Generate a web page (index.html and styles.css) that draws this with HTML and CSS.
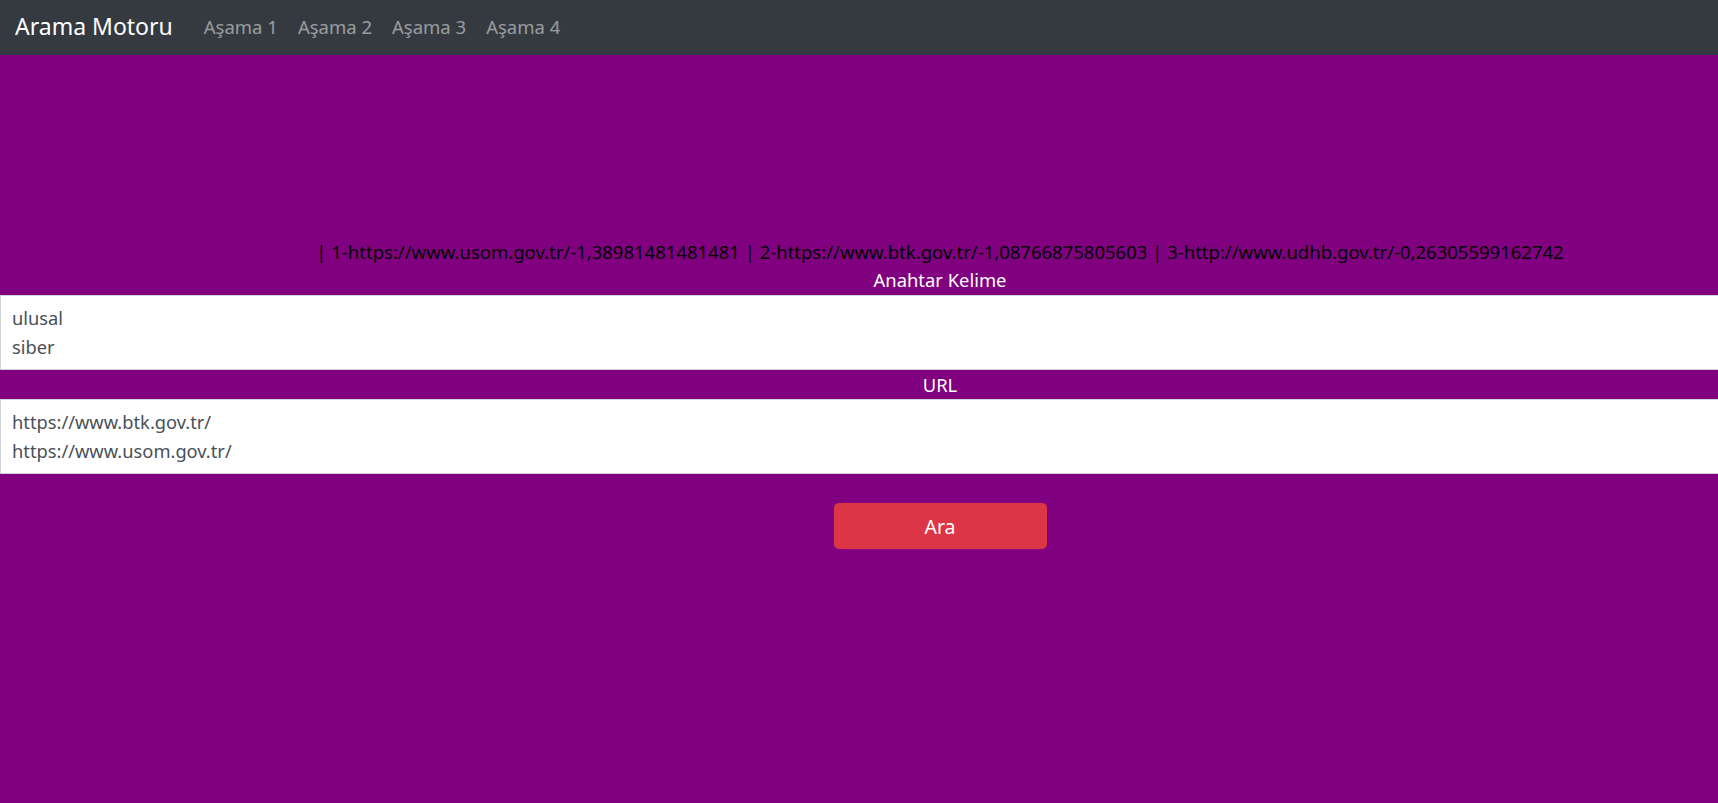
FILE: index.html
```html
<!DOCTYPE html>
<html lang="tr">
<head>
<meta charset="utf-8">
<title>Arama Motoru</title>
<link rel="stylesheet" href="styles.css">
</head>
<body>
<nav class="navbar">
  <a class="brand" href="#">Arama Motoru</a>
  <ul class="nav-links">
    <li><a href="#">Aşama 1</a></li>
    <li><a href="#">Aşama 2</a></li>
    <li><a href="#">Aşama 3</a></li>
    <li><a href="#">Aşama 4</a></li>
  </ul>
</nav>
<main class="page">
  <p class="results">| 1-https://www.usom.gov.tr/-1,38981481481481 | 2-https://www.btk.gov.tr/-1,08766875805603 | 3-http://www.udhb.gov.tr/-0,26305599162742</p>
  <label class="field-label" for="kw">Anahtar Kelime</label>
  <textarea id="kw" class="field">ulusal
siber</textarea>
  <label class="field-label url-label" for="url">URL</label>
  <textarea id="url" class="field">https://www.btk.gov.tr/
https://www.usom.gov.tr/</textarea>
  <div class="actions">
    <button class="btn-search" type="button">Ara</button>
  </div>
</main>
</body>
</html>
```
FILE: styles.css
```css
html, body {
  margin: 0;
  padding: 0;
}
body {
  background: #800080;
  font-family: "Noto Sans", "Open Sans", sans-serif;
  min-height: 100vh;
}
.navbar {
  height: 55px;
  box-sizing: border-box;
  background: #343a40;
  display: flex;
  align-items: center;
  padding: 0 15px 3px;
}
.brand {
  color: #fff;
  text-decoration: none;
  font-size: 23px;
  margin-right: 31px;
}
.nav-links {
  list-style: none;
  display: flex;
  gap: 20px;
  margin: 0;
  padding: 0;
}
.nav-links a {
  color: rgba(255, 255, 255, 0.5);
  text-decoration: none;
  font-size: 18.5px;
}
.page {
  display: flex;
  flex-direction: column;
  padding-top: 184px;
}
.results {
  margin: 0;
  padding-left: 162px;
  color: #000;
  font-size: 18.5px;
  line-height: 26px;
  text-align: center;
  white-space: nowrap;
}
.field-label {
  display: block;
  padding-left: 162px;
  color: #fff;
  font-size: 18.4px;
  line-height: 30px;
  text-align: center;
}
.url-label {
  line-height: 29px;
}
.field {
  display: block;
  box-sizing: border-box;
  width: 100%;
  height: 75px;
  margin: 0;
  padding: 8px 11px 5px;
  border: 1px solid #ced4da;
  border-right: none;
  background: #fff;
  color: #495057;
  font-family: "Noto Sans", "Open Sans", sans-serif;
  font-size: 18.3px;
  line-height: 28.5px;
  resize: none;
  overflow: hidden;
}
.actions {
  display: flex;
  justify-content: center;
  padding-top: 29px;
  padding-left: 162px;
}
.btn-search {
  width: 213px;
  height: 46px;
  border: none;
  border-radius: 5px;
  background: #dc3545;
  color: #fff;
  font-family: "Noto Sans", "Open Sans", sans-serif;
  font-size: 19.5px;
}
```
